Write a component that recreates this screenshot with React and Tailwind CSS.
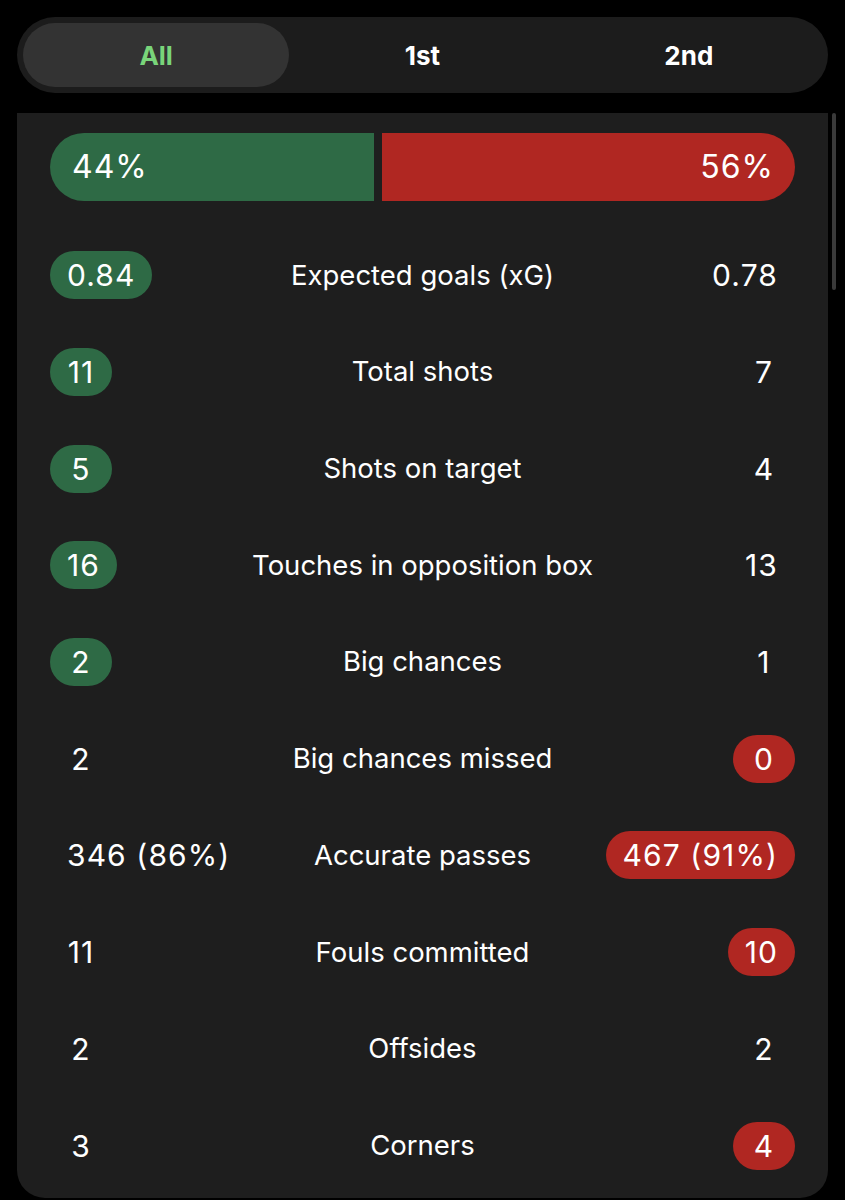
import React from "react";

const GREEN = "bg-[#2e6a45]";
const RED = "bg-[#b02722]";

const rows = [
  { l: "0.84", label: "Expected goals (xG)", r: "0.78", win: "l" },
  { l: "11", label: "Total shots", r: "7", win: "l" },
  { l: "5", label: "Shots on target", r: "4", win: "l" },
  { l: "16", label: "Touches in opposition box", r: "13", win: "l" },
  { l: "2", label: "Big chances", r: "1", win: "l" },
  { l: "2", label: "Big chances missed", r: "0", win: "r" },
  { l: "346 (86%)", label: "Accurate passes", r: "467 (91%)", win: "r" },
  { l: "11", label: "Fouls committed", r: "10", win: "r" },
  { l: "2", label: "Offsides", r: "2", win: "n" },
  { l: "3", label: "Corners", r: "4", win: "r" },
];

function Val({ v, pill, color, align }) {
  return (
    <div className={`flex ${align === "l" ? "justify-start" : "justify-end"}`}>
      <span
        className={`h-[48px] min-w-[62px] flex items-center justify-center px-[17px] rounded-full text-[30px] tracking-[1.1px] leading-none text-white ${pill ? color : ""}`}
      >
        {v}
      </span>
    </div>
  );
}

export default function App() {
  return (
    <div
      className="min-h-[1200px] w-[845px] bg-black text-white overflow-hidden"
      style={{ fontFamily: "Inter, 'Noto Sans', sans-serif" }}
    >
      <div className="pt-[17px] px-[17px] w-[845px]">
        <div className="h-[76px] rounded-full bg-[#1c1c1c] p-[6px] grid grid-cols-3">
          <div className="rounded-full bg-[#333333] flex items-center justify-center text-[26px] font-bold text-[#79d57a]">
            All
          </div>
          <div className="flex items-center justify-center text-[26px] font-bold text-white">1st</div>
          <div className="flex items-center justify-center text-[26px] font-bold text-white">2nd</div>
        </div>
      </div>
      <div className="flex pt-[20px] pl-[17px]">
        <div className="w-[811px] bg-[#1e1e1e] rounded-b-[28px] pt-[20px] pb-[4px] px-[33px]">
          <div className="flex h-[68px] gap-[8px]">
            <div className={`w-[324px] ${GREEN} rounded-l-full flex items-center pl-[22px] text-[32px] tracking-[1px]`}>44%</div>
            <div className={`flex-1 ${RED} rounded-r-full flex items-center justify-end pr-[21px] text-[32px] tracking-[1px]`}>56%</div>
          </div>
          <div className="pt-[26px]">
            {rows.map((r, i) => (
              <div key={i} className="h-[96.7px] grid grid-cols-[1fr_auto_1fr] items-center">
                <Val v={r.l} pill={r.win === "l"} color={GREEN} align="l" />
                <div className="text-[27.5px] text-white text-center px-2">{r.label}</div>
                <Val v={r.r} pill={r.win === "r"} color={RED} align="r" />
              </div>
            ))}
          </div>
        </div>
        <div className="ml-[4px] w-[4px] h-[177px] rounded-full bg-[#3a3a3a]" />
      </div>
    </div>
  );
}
